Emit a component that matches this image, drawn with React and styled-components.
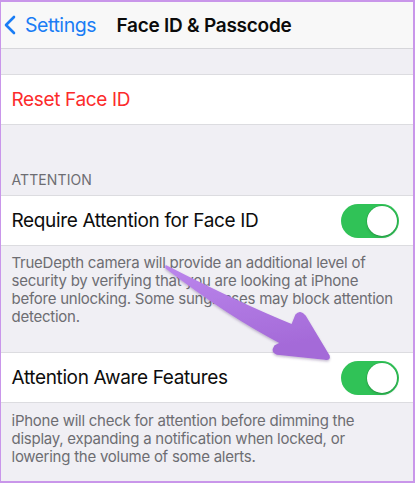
import React from 'react';
import styled, { createGlobalStyle } from 'styled-components';

const GlobalStyle = createGlobalStyle`
  html, body {
    margin: 0;
    padding: 0;
    background: #f0eff4;
  }
  * {
    box-sizing: border-box;
  }
`;

const Screen = styled.div`
  position: relative;
  width: 415px;
  height: 483px;
  overflow: hidden;
  background: #f0eff4;
  border: 2px solid #c996ea;
  border-left-width: 1.5px;
  font-family: 'Inter', 'Liberation Sans', sans-serif;
  -webkit-font-smoothing: antialiased;
`;

const NavBar = styled.div`
  display: grid;
  grid-template-columns: 1fr auto 1fr;
  align-items: center;
  height: 47px;
  padding-right: 6px;
  background: #f8f8f8;
  border-bottom: 1px solid #d6d6da;
`;

const BackButton = styled.div`
  display: flex;
  align-items: center;
  gap: 9px;
  padding-left: 3px;
  color: #1a7df5;
  font-size: 19.5px;
  letter-spacing: -0.45px;
`;

const Title = styled.div`
  font-size: 19px;
  font-weight: 600;
  color: #0b0b0b;
  letter-spacing: -0.25px;
`;

const Spacer = styled.div`
  height: ${p => p.h}px;
`;

const Group = styled.div`
  background: #ffffff;
  border-top: 1px solid #dcdce0;
  border-bottom: 1px solid #dcdce0;
`;

const Row = styled.div`
  display: flex;
  align-items: center;
  justify-content: space-between;
  height: 49px;
  padding: 0 14px 0 10.5px;
`;

const Label = styled.span`
  font-size: 19px;
  color: ${p => (p.danger ? '#fc2b2b' : '#0d0d0d')};
  letter-spacing: -0.36px;
`;

const SectionHeader = styled.div`
  padding: 46px 10.5px 7px;
  font-size: 14px;
  line-height: 17px;
  color: #6d6d72;
  text-transform: uppercase;
  letter-spacing: 0.1px;
`;

const Footer = styled.div`
  padding: ${p => p.pt}px 18px ${p => p.pb}px 10.5px;
  font-size: 15px;
  line-height: 18.3px;
  color: #6d6d72;
  letter-spacing: -0.25px;
`;

const Track = styled.div`
  display: flex;
  align-items: center;
  justify-content: ${p => (p.on ? 'flex-end' : 'flex-start')};
  width: 58px;
  height: 34px;
  padding: 2px;
  border-radius: 17px;
  background: ${p => (p.on ? '#30c257' : '#e5e5ea')};
`;

const Knob = styled.div`
  width: 30px;
  height: 30px;
  border-radius: 50%;
  background: #ffffff;
  box-shadow: 0 0 0 0.5px rgba(0, 80, 20, 0.25), 0 2px 3px rgba(0, 0, 0, 0.12);
`;

const Overlay = styled.svg`
  position: absolute;
  left: -1.5px;
  top: -2px;
  pointer-events: none;
`;

function Toggle({ on }) {
  return (
    <Track on={on ? 1 : 0}>
      <Knob />
    </Track>
  );
}

function Chevron() {
  return (
    <svg width="12" height="20" viewBox="0 0 12 20">
      <path d="M10 2 L2 10 L10 18" fill="none" stroke="#1a7df5" strokeWidth="2.6" strokeLinecap="round" strokeLinejoin="round" />
    </svg>
  );
}

function Arrow() {
  return (
    <Overlay width="415" height="483" viewBox="0 0 415 483">
      <defs>
        <linearGradient id="arrowFill" x1="0" y1="0" x2="0.3" y2="1">
          <stop offset="0" stopColor="#bb86ec" />
          <stop offset="1" stopColor="#a46ad8" />
        </linearGradient>
        <filter id="arrowShadow" x="-10%" y="-10%" width="120%" height="130%">
          <feDropShadow dx="0" dy="1.5" stdDeviation="1" floodColor="#5a3a7a" floodOpacity="0.35" />
        </filter>
      </defs>
      <path
        d="M166 266 C 205 286 245 306 292 325 L 296 315 Q 300 310 305 316 L 329 356 Q 330 360 325 359 L 277 354 Q 271 352 275 346 L 281 343 C 240 322 200 294 166 268 Z"
        fill="url(#arrowFill)"
        stroke="url(#arrowFill)"
        strokeWidth="1.5"
        strokeLinejoin="round"
        filter="url(#arrowShadow)"
      />
    </Overlay>
  );
}

export default function App() {
  return (
    <>
      <GlobalStyle />
      <Screen>
        <NavBar>
          <BackButton>
            <Chevron />
            Settings
          </BackButton>
          <Title>Face ID &amp; Passcode</Title>
          <div />
        </NavBar>
        <Spacer h={25} />
        <Group>
          <Row>
            <Label danger={1}>Reset Face ID</Label>
          </Row>
        </Group>
        <SectionHeader>Attention</SectionHeader>
        <Group>
          <Row>
            <Label>Require Attention for Face ID</Label>
            <Toggle on />
          </Row>
        </Group>
        <Footer pt={7.5} pb={25.5}>
          TrueDepth camera will provide an additional level of security by verifying that you are looking at iPhone before unlocking. Some sunglasses may block attention detection.
        </Footer>
        <Group>
          <Row>
            <Label>Attention Aware Features</Label>
            <Toggle on />
          </Row>
        </Group>
        <Footer pt={8.5} pb={20}>
          iPhone will check for attention before dimming the display, expanding a notification when locked, or lowering the volume of some alerts.
        </Footer>
        <Arrow />
      </Screen>
    </>
  );
}
